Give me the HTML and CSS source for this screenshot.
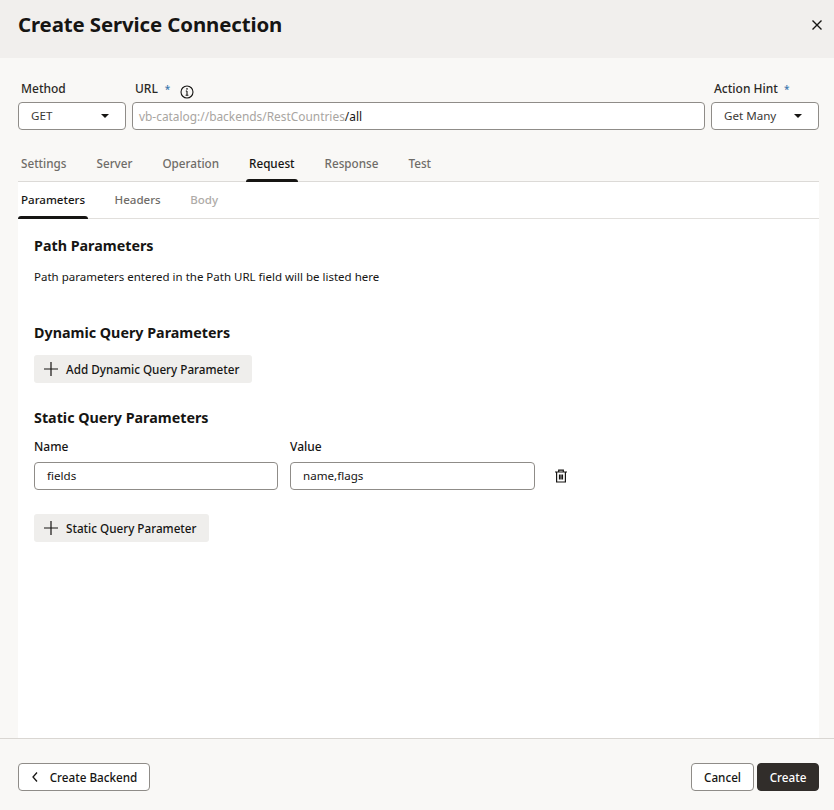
FILE: index.html
```html
<!DOCTYPE html>
<html lang="en">
<head>
<meta charset="utf-8">
<title>Create Service Connection</title>
<link rel="stylesheet" href="styles.css">
</head>
<body>
<div class="dialog">
  <header class="head">
    <h1>Create Service Connection</h1>
    <svg class="close" viewBox="0 0 12 12" width="12" height="12"><path d="M1.5 1.5l9 9M10.5 1.5l-9 9" fill="none" stroke="#161513" stroke-width="1.4"/></svg>
  </header>
  <main class="body">
    <div class="urlrow">
      <div class="field f-method">
        <div class="lbl">Method</div>
        <div class="box sel"><span>GET</span><i class="caret"></i></div>
      </div>
      <div class="field f-url">
        <div class="lbl">URL <b class="req">*</b>
          <svg class="info" viewBox="0 0 14 14" width="14" height="14"><circle cx="7" cy="7" r="6" fill="none" stroke="#161513" stroke-width="1.1"/><path d="M7 6v4.2M5.6 10.2h2.8M5.8 6h1.2" fill="none" stroke="#161513" stroke-width="1.1"/><circle cx="7" cy="3.9" r=".8" fill="#161513"/></svg>
        </div>
        <div class="box urlbox"><span class="muted">vb-catalog://backends/RestCountries</span><span>/all</span></div>
      </div>
      <div class="field f-hint">
        <div class="lbl">Action Hint <b class="req">*</b></div>
        <div class="box sel"><span>Get Many</span><i class="caret"></i></div>
      </div>
    </div>
    <nav class="tabs top">
      <span class="tab">Settings</span>
      <span class="tab">Server</span>
      <span class="tab">Operation</span>
      <span class="tab on">Request</span>
      <span class="tab">Response</span>
      <span class="tab">Test</span>
    </nav>
    <section class="panel">
      <nav class="tabs sub">
        <span class="tab on">Parameters</span>
        <span class="tab">Headers</span>
        <span class="tab off">Body</span>
      </nav>
      <div class="content">
        <h2 class="h-path">Path Parameters</h2>
        <p class="note">Path parameters entered in the Path URL field will be listed here</p>
        <h2 class="h-dyn">Dynamic Query Parameters</h2>
        <button class="add" type="button"><svg viewBox="0 0 14 14" width="14" height="14"><path d="M7 0v14M0 7h14" stroke="#161513" stroke-width="1.2" fill="none"/></svg>Add Dynamic Query Parameter</button>
        <h2 class="h-static">Static Query Parameters</h2>
        <div class="params">
          <div class="pfield"><div class="plabel">Name</div><div class="box pbox">fields</div></div>
          <div class="pfield"><div class="plabel">Value</div><div class="box pbox">name,flags</div></div>
          <svg class="trash" viewBox="0 0 14 14" width="14" height="14"><path d="M1 3h12M4.7 3V1.2h4.6V3M2.6 3v10h8.8V3M5.5 5.5v5M7 5.5v5M8.5 5.5v5" fill="none" stroke="#161513" stroke-width="1.2"/></svg>
        </div>
        <button class="add add2" type="button"><svg viewBox="0 0 14 14" width="14" height="14"><path d="M7 0v14M0 7h14" stroke="#161513" stroke-width="1.2" fill="none"/></svg>Static Query Parameter</button>
      </div>
    </section>
  </main>
  <footer class="foot">
    <button class="btn back" type="button"><svg viewBox="0 0 8 12" width="8" height="12"><path d="M6 1.5L2 6l4 4.5" fill="none" stroke="#161513" stroke-width="1.3"/></svg>Create Backend</button>
    <div class="right">
      <button class="btn cancel" type="button">Cancel</button>
      <button class="btn primary" type="button">Create</button>
    </div>
  </footer>
</div>
</body>
</html>
```
FILE: styles.css
```css
* { box-sizing: border-box; }
html, body { margin: 0; padding: 0; }
body { font-family: "Noto Sans", "Open Sans", sans-serif; color: #161513; font-size: 11.6px; background: #f9f8f6; }
.dialog { width: 834px; height: 810px; display: flex; flex-direction: column; overflow: hidden; }
.head { height: 58px; flex: none; background: #f1efed; display: flex; align-items: center; justify-content: space-between; padding: 0 11px 10px 18px; }
.head h1 { margin: 0; font-size: 20.4px; font-weight: 700; letter-spacing: -0.1px; }
.close { display: block; margin-top: 2px; }
.body { height: 680px; flex: none; padding: 0 15px 0 18px; display: flex; flex-direction: column; }
.urlrow { display: flex; gap: 6px; padding-top: 22px; height: 88px; flex: none; }
.field { display: flex; flex-direction: column; }
.f-method { width: 108px; }
.f-url { width: 573px; }
.f-hint { width: 108px; }
.lbl { height: 22px; padding: 1px 0 0 3px; line-height: 16px; font-size: 12px; font-weight: 500; color: #2b2926; display: flex; gap: 4px; }
.req { color: #3a76ad; font-weight: 500; font-size: 10px; margin-left: 2px; }
.f-url .req { margin-left: 3px; }
.info { margin: 4px 0 0 6px; }
.box { height: 28px; background: #fff; border: 1px solid #8f8c88; border-radius: 4px; display: flex; align-items: center; font-size: 11.6px; padding-bottom: 1px; }
.sel { padding-left: 12px; padding-right: 12px; justify-content: space-between; color: #3b3936; }
.caret { width: 0; height: 0; border-left: 4px solid transparent; border-right: 4px solid transparent; border-top: 4px solid #161513; margin-right: 4px; }
.urlbox { padding-left: 6px; padding-right: 6px; font-size: 11.9px; }
.muted { color: #a8a5a1; }
.tabs { display: flex; flex: none; font-size: 11.7px; }
.top { height: 36px; gap: 30px; border-bottom: 1px solid #dcdad7; padding: 0 3px; width: 801px; }
.sub { height: 37px; gap: 29.5px; border-bottom: 1px solid #e1dfdc; padding: 0 3px; background: #fff; font-size: 11.55px; }
.tab { position: relative; color: #6f6c68; font-weight: 500; line-height: 16px; padding-top: 9px; }
.sub .tab { padding-top: 10px; }
.tab.on { color: #161513; }
.tab.off { color: #aeaba7; }
.tab.on::after { content: ""; position: absolute; left: -3px; right: -3px; bottom: -1px; height: 3px; background: #161513; border-radius: 3px 3px 0 0; }
.panel { flex: 1; width: 801px; background: #fff; }
.content { padding: 0 16px; }
h2 { margin: 0; font-size: 14.3px; font-weight: 700; line-height: 20px; }
.h-path { padding-top: 17px; box-sizing: content-box; height: 20px; }
.note { margin: 13px 0 0; line-height: 16px; font-size: 11.5px; }
.h-dyn { margin-top: 38px; }
.add { margin-top: 12px; height: 28px; border: 0; border-radius: 3px; background: #efeeec; font: 500 11.7px "Noto Sans", sans-serif; color: #161513; padding: 0 13px 1px 10px; display: flex; align-items: center; gap: 8px; }
.add svg { margin-top: 1px; }
.h-static { margin-top: 25px; }
.params { display: flex; align-items: flex-end; gap: 12px; margin-top: 11px; }
.pfield { width: 244px; }
.plabel { font-size: 12px; font-weight: 500; line-height: 16px; height: 23px; }
.pbox { padding-left: 12px; padding-right: 12px; }
.pfield + .pfield { width: 245px; }
.trash { margin: 0 0 7px 7px; }
.add2 { margin-top: 24px; }
.foot { height: 72px; flex: none; border-top: 1px solid #d9d6d2; padding: 24px 15px 0 18px; display: flex; justify-content: space-between; align-items: flex-start; }
.right { display: flex; gap: 3px; }
.btn { height: 28px; border: 1px solid #8f8c88; border-radius: 4px; background: #fff; font: 500 11.7px "Noto Sans", sans-serif; color: #161513; display: flex; align-items: center; justify-content: center; }
.back { width: 132px; gap: 11px; }
.cancel { width: 63px; }
.primary { width: 62px; background: #312d2a; border-color: #312d2a; color: #fff; }
```
